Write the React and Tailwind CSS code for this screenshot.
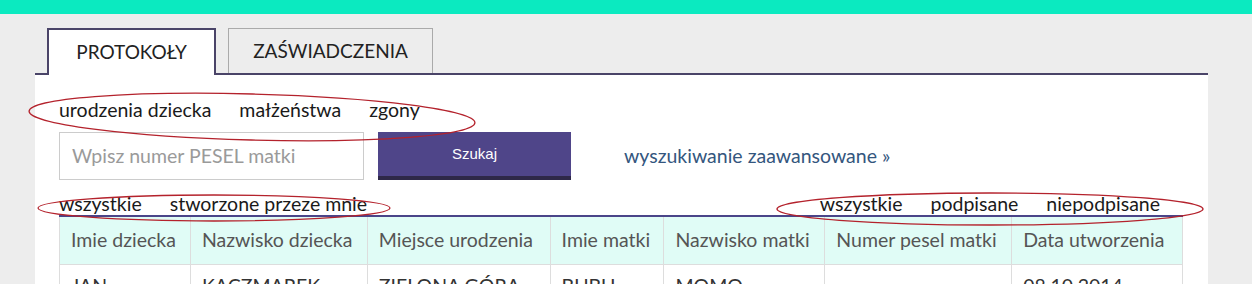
import React from "react";

const cols = [
  { label: "Imie dziecka", w: 131, v: "JAN" },
  { label: "Nazwisko dziecka", w: 177, v: "KACZMAREK" },
  { label: "Miejsce urodzenia", w: 183, v: "ZIELONA GÓRA" },
  { label: "Imie matki", w: 114, v: "BUBU" },
  { label: "Nazwisko matki", w: 161, v: "MOMO" },
  { label: "Numer pesel matki", w: 187, v: "" },
  { label: "Data utworzenia", w: 171, v: "08.10.2014" },
];

export default function App() {
  return (
    <div
      className="relative w-[1252px] h-[284px] overflow-hidden bg-[#ededed]"
      style={{ fontFamily: "Lato, 'Open Sans', sans-serif" }}
    >
      <div className="h-[14px] bg-[#0beac0]" />
      <div className="ml-[35px] w-[1173px] pt-[14px]">
        {/* Tabs */}
        <div className="flex items-start gap-[12px] pl-[12px] border-b-2 border-[#4a4468] h-[47px]">
          <div className="relative z-10 w-[169px] h-[47px] bg-white border-2 border-b-0 border-[#4a4468] flex items-center justify-center text-[19px] text-[#222]">
            PROTOKOŁY
          </div>
          <div className="w-[205px] h-[45px] border border-b-0 border-[#aaaaaa] flex items-center justify-center text-[19px] text-[#222]">
            ZAŚWIADCZENIA
          </div>
        </div>

        {/* Panel */}
        <div className="bg-white pl-[24px] pr-[25px] pt-[23px] h-[300px]">
          <div className="flex gap-[28px] text-[19.5px] leading-[24px] text-[#1a1a1a]">
            <span>urodzenia dziecka</span>
            <span>małżeństwa</span>
            <span>zgony</span>
          </div>

          <div className="flex items-center mt-[10px]">
            <div className="w-[305px] h-[48px] border border-[#cccccc] flex items-center pl-[12px] text-[19.5px] text-[#9a9a9a]">
              Wpisz numer PESEL matki
            </div>
            <div
              className="ml-[14px] w-[193px] h-[48px] bg-[#4f4589] border-b-4 border-[#2e2848] flex items-center justify-center text-white text-[15px]"
              style={{ fontFamily: "'Liberation Sans', Arial, sans-serif" }}
            >
              Szukaj
            </div>
            <span className="ml-[53px] text-[19.5px] text-[#34567e]">
              wyszukiwanie zaawansowane »
            </span>
          </div>

          <div className="mt-[13px] flex justify-between border-b-2 border-[#4a4589] text-[19.5px] leading-[22px] text-[#1a1a1a]">
            <div className="flex gap-[28px]">
              <span>wszystkie</span>
              <span>stworzone przeze mnie</span>
            </div>
            <div className="flex gap-[28px] pr-[23px]">
              <span>wszystkie</span>
              <span>podpisane</span>
              <span>niepodpisane</span>
            </div>
          </div>

          <table className="border-collapse text-[19.5px] leading-[24px]">
            <thead>
              <tr className="bg-[#e0fcf6]">
                {cols.map((c) => (
                  <th
                    key={c.label}
                    style={{ width: c.w }}
                    className="border border-[#dddddd] border-t-0 px-[11px] h-[47px] text-left font-normal text-[#555555] whitespace-nowrap"
                  >
                    {c.label}
                  </th>
                ))}
              </tr>
            </thead>
            <tbody>
              <tr>
                {cols.map((c) => (
                  <td
                    key={c.label}
                    className="border border-[#dddddd] px-[11px] pt-[9px] pb-[12px] text-[#333333] whitespace-nowrap align-top"
                  >
                    {c.v}
                  </td>
                ))}
              </tr>
            </tbody>
          </table>
        </div>
      </div>

      {/* Red hand-drawn annotation ellipses */}
      <svg
        className="absolute left-0 top-0 pointer-events-none"
        width="1252"
        height="284"
        viewBox="0 0 1252 284"
      >
        <g fill="none" stroke="#b4222c" strokeWidth="1.3">
          <ellipse cx="252" cy="117" rx="223" ry="23" transform="rotate(1.5 252 117)" />
          <ellipse cx="214" cy="208" rx="176" ry="13" />
          <ellipse cx="990" cy="209" rx="213" ry="16" />
        </g>
      </svg>
    </div>
  );
}
